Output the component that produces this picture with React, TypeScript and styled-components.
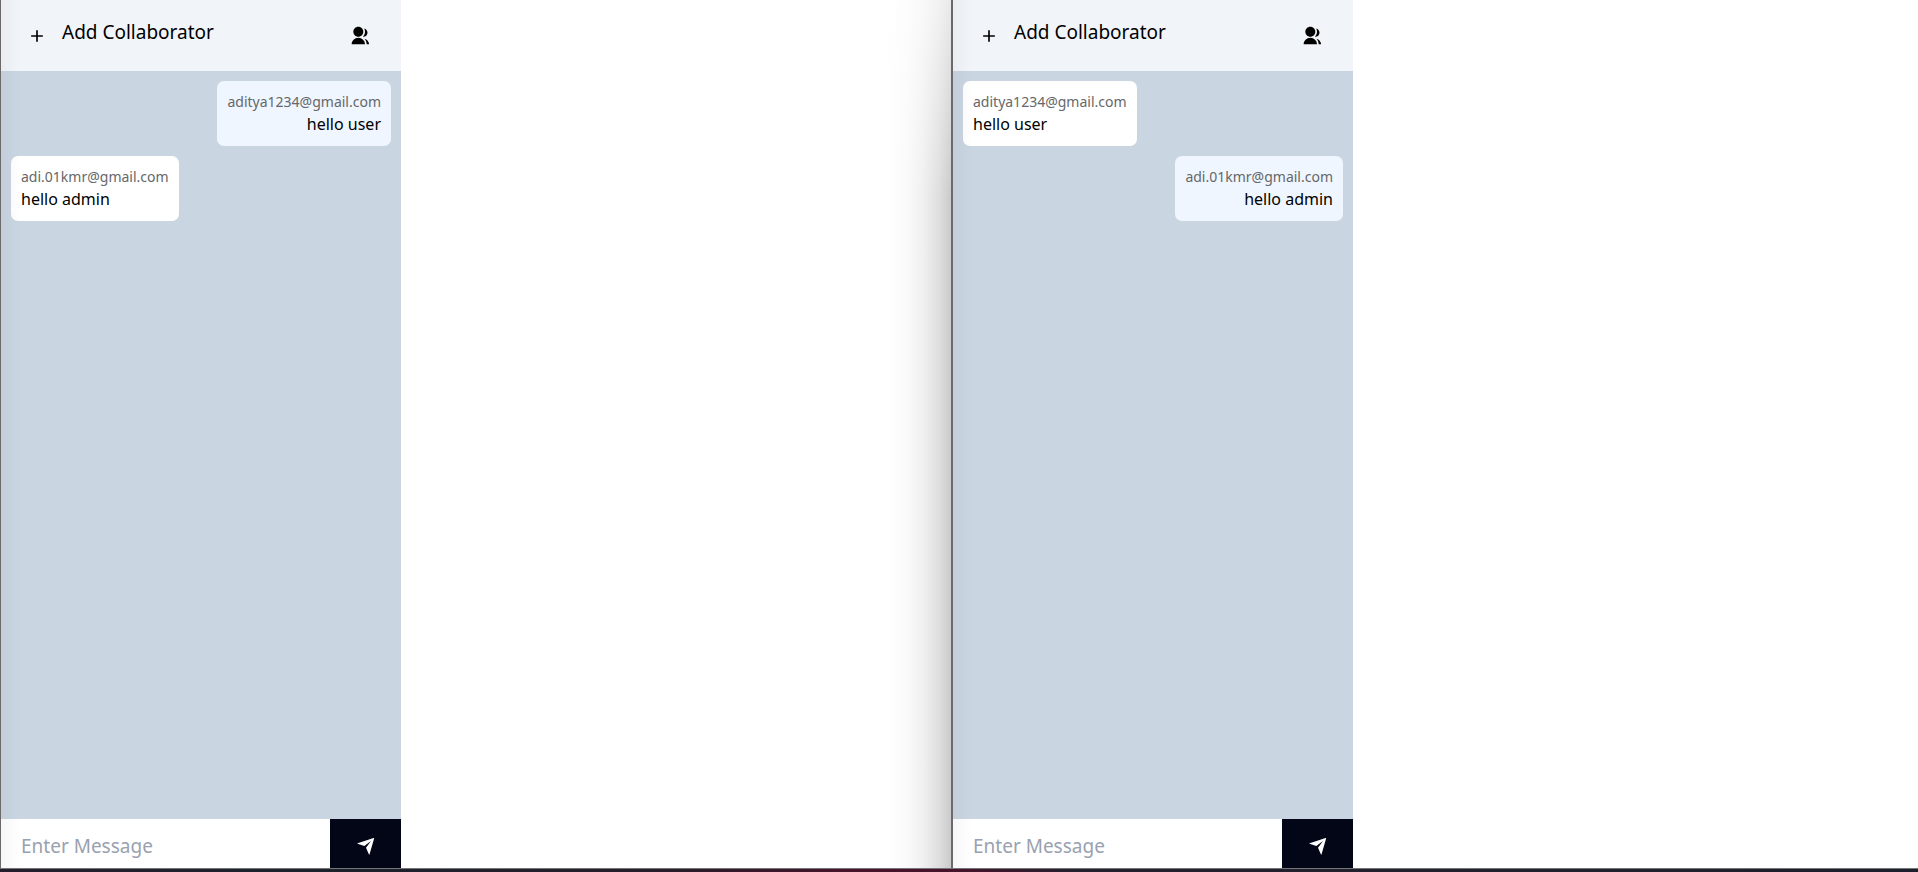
import React from "react";
import styled, { createGlobalStyle } from "styled-components";
import { RiAddFill, RiGroupFill, RiSendPlaneFill } from "react-icons/ri";

const GlobalStyle = createGlobalStyle`
  *, *::before, *::after { box-sizing: border-box; }
  body {
    margin: 0;
    background: #ffffff;
    color: #000000;
    font-family: "Segoe UI", "Noto Sans", sans-serif;
  }
  button, input { font: inherit; color: inherit; border: 0; margin: 0; }
`;

const Desktop = styled.div`
  display: flex;
  flex-direction: column;
  min-height: 100vh;
`;

const Windows = styled.div`
  display: flex;
  flex: 1;
`;

const Window = styled.section<{ $share: number; $edge: number; $behind?: boolean }>`
  display: flex;
  flex: ${(p) => p.$share} 1 0;
  min-width: 0;
  border-left: ${(p) => p.$edge}px solid #6b6969;
  background: ${(p) =>
    p.$behind
      ? "linear-gradient(to bottom, rgba(255, 255, 255, 0.6), transparent 200px), linear-gradient(to left, #cacaca 0, #dedede 12px, #f0f0f0 28px, #fafafa 44px, #ffffff 64px)"
      : "#ffffff"};
`;

const ChatPanel = styled.div`
  position: relative;
  display: flex;
  flex-direction: column;
  width: 400px;
  background: #cad5e2;

  &::after {
    content: "";
    position: absolute;
    inset: 0 auto 0 0;
    width: 20px;
    background: linear-gradient(to right, rgba(0, 0, 0, 0.03), transparent);
    pointer-events: none;
  }
`;

const Header = styled.header`
  display: flex;
  justify-content: space-between;
  align-items: flex-start;
  height: 71px;
  padding: 10px 20px;
  background: #f1f5f9;
`;

const AddButton = styled.button`
  display: flex;
  gap: 15px;
  padding: 8px 6px;
  background: transparent;
  font-size: 19px;
  line-height: 28px;

  svg { margin-top: 8px; }
`;

const IconButton = styled.button`
  display: flex;
  padding: 16px 11px;
  background: transparent;
`;

const Messages = styled.div`
  display: flex;
  flex: 1;
  flex-direction: column;
  gap: 10px;
  padding: 10px;
`;

const Bubble = styled.article<{ $own: boolean }>`
  display: flex;
  flex-direction: column;
  align-self: ${(p) => (p.$own ? "flex-end" : "flex-start")};
  padding: 10px;
  border-radius: 7px;
  background: ${(p) => (p.$own ? "#eff6ff" : "#ffffff")};
  text-align: ${(p) => (p.$own ? "right" : "left")};
`;

const Sender = styled.small`
  color: #666769;
  font-size: 14px;
  line-height: 22px;
`;

const Body = styled.p`
  margin: 0;
  font-size: 16px;
  line-height: 23px;
`;

const Composer = styled.form`
  display: flex;
  height: 49px;
  background: #ffffff;
`;

const MessageInput = styled.input`
  flex: 1;
  min-width: 0;
  padding: 12px 20px 8px;
  background: transparent;
  font-size: 19px;
  outline: none;

  &::placeholder { color: #99a1af; opacity: 1; }
`;

const SendButton = styled.button`
  display: flex;
  align-items: center;
  justify-content: center;
  width: 71px;
  padding: 4px 0 0;
  background: #020617;
  color: #ffffff;
`;

const Taskbar = styled.div`
  height: 4px;
  border-top: 1px solid #777777;
  background: linear-gradient(to right, #241e2c, #1b222c 15%, #241e2a 34%, #45142a 44%, #45142a 50%, #24202e 56%, #1c202c);
`;

type Message = { sender: string; text: string };

const messages: Message[] = [
  { sender: "aditya1234@gmail.com", text: "hello user" },
  { sender: "adi.01kmr@gmail.com", text: "hello admin" },
];

function Chat({ user }: { user: string }) {
  return (
    <ChatPanel>
      <Header>
        <AddButton type="button">
          <RiAddFill size={20} aria-hidden />
          <span>Add Collaborator</span>
        </AddButton>
        <IconButton type="button" aria-label="Show collaborators">
          <RiGroupFill size={20} aria-hidden />
        </IconButton>
      </Header>
      <Messages>
        {messages.map((m) => (
          <Bubble key={m.sender} $own={m.sender === user}>
            <Sender>{m.sender}</Sender>
            <Body>{m.text}</Body>
          </Bubble>
        ))}
      </Messages>
      <Composer onSubmit={(e) => e.preventDefault()}>
        <MessageInput type="text" placeholder="Enter Message" aria-label="Enter Message" />
        <SendButton type="submit" aria-label="Send">
          <RiSendPlaneFill size={20} aria-hidden />
        </SendButton>
      </Composer>
    </ChatPanel>
  );
}

export default function App() {
  return (
    <>
      <GlobalStyle />
      <Desktop>
        <Windows>
          <Window $share={950} $edge={1} $behind>
            <Chat user="aditya1234@gmail.com" />
          </Window>
          <Window $share={965} $edge={2}>
            <Chat user="adi.01kmr@gmail.com" />
          </Window>
        </Windows>
        <Taskbar />
      </Desktop>
    </>
  );
}
